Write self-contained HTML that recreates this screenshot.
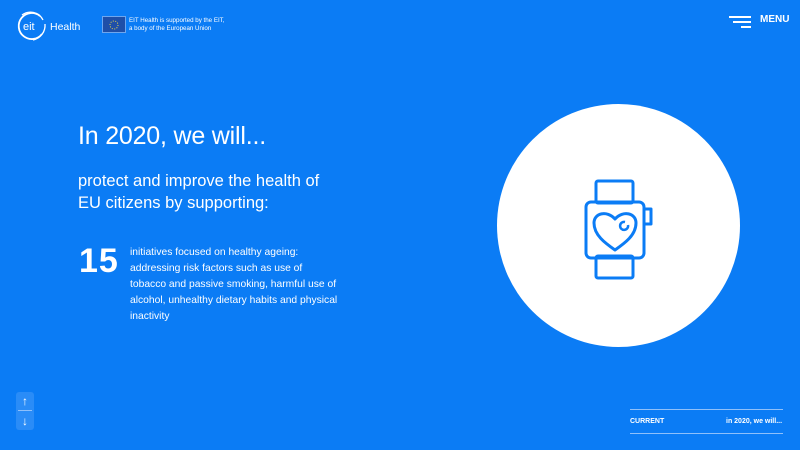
<!DOCTYPE html>
<html><head><meta charset="utf-8"><style>
*{margin:0;padding:0;box-sizing:border-box}
body{width:800px;height:450px;background:#0b7cf5;overflow:hidden;position:relative;font-family:"Liberation Sans",sans-serif;color:#fff}
.a{position:absolute}
</style></head><body>
<svg class="a" style="left:15px;top:10px" width="80" height="32" viewBox="0 0 80 32">
 <path d="M25 6 A13 13 0 1 0 27 24" stroke="#fff" stroke-width="1.8" fill="none"/>
 <path d="M28 10 A14 14 0 0 0 7 5" stroke="#fff" stroke-width="1.3" fill="none"/>
 <path d="M30 14 A15 15 0 0 1 18 30" stroke="#fff" stroke-width="1.3" fill="none"/>
 <text x="8" y="20" font-size="11" fill="#fff" font-family="Liberation Sans">eit</text>
 <text x="35" y="20" font-size="10.5" fill="#fff" font-family="Liberation Sans">Health</text>
</svg>
<div class="a" style="left:102px;top:16px;width:24px;height:17px;background:#1f4fa8;border:1px solid #6fa6ee"></div>
<svg class="a" style="left:108px;top:19px" width="12" height="12"><circle cx="6" cy="6" r="4" stroke="#e8d84a" stroke-width="1" stroke-dasharray="1 1.5" fill="none"/></svg>
<div class="a" style="left:129px;top:17px;font-size:6.2px;line-height:8px">EIT Health is supported by the EIT,<br>a body of the European Union</div>
<div class="a" style="left:729px;top:16px;width:22px;height:2px;background:#fff"></div>
<div class="a" style="left:733px;top:21px;width:18px;height:2px;background:#fff"></div>
<div class="a" style="left:741px;top:26px;width:10px;height:2px;background:#fff"></div>
<div class="a" style="left:760px;top:14px;font-size:10px;font-weight:bold">MENU</div>
<div class="a" style="left:78px;top:122px;font-size:25px;letter-spacing:-0.2px">In 2020, we will...</div>
<div class="a" style="left:78px;top:170px;font-size:16.5px;line-height:22px">protect and improve the health of<br>EU citizens by supporting:</div>
<div class="a" style="left:79px;top:242px;font-size:34px;font-weight:bold;letter-spacing:1px">15</div>
<div class="a" style="left:130px;top:245px;font-size:10.3px;line-height:16px">initiatives focused on healthy ageing:<br>addressing risk factors such as use of<br>tobacco and passive smoking, harmful use of<br>alcohol, unhealthy dietary habits and physical<br>inactivity</div>
<div class="a" style="left:497px;top:104px;width:243px;height:243px;border-radius:50%;background:#fff"></div>
<svg class="a" style="left:560px;top:170px" width="110" height="110" viewBox="0 0 110 110" fill="none" stroke="#0b7cf5" stroke-width="3" stroke-linejoin="round">
 <rect x="36" y="11" width="37" height="22" rx="2"/>
 <rect x="36" y="86" width="37" height="22" rx="2"/>
 <rect x="26" y="32" width="58" height="56" rx="5"/>
 <rect x="84" y="39" width="7" height="15"/>
 <path d="M55 80 C45 73 34 65 34 53 C34 43 47 40 55 49 C63 40 76 43 76 53 C76 65 65 73 55 80Z"/>
 <path d="M65 52 A4 4 0 1 0 68 55" stroke-width="2.5"/>
</svg>
<div class="a" style="left:16px;top:392px;width:18px;height:38px;border-radius:3px;background:#2a8cf7"></div>
<div class="a" style="left:18px;top:410px;width:14px;height:1px;background:#8fc0fa"></div>
<div class="a" style="left:17px;top:394px;font-size:12px;font-weight:bold;width:16px;text-align:center">↑</div>
<div class="a" style="left:17px;top:414px;font-size:12px;font-weight:bold;width:16px;text-align:center">↓</div>
<div class="a" style="left:630px;top:409px;width:153px;height:1px;background:#8fc0fa"></div>
<div class="a" style="left:630px;top:433px;width:153px;height:1px;background:#8fc0fa"></div>
<div class="a" style="left:630px;top:418px;font-size:7px;font-weight:bold">CURRENT</div>
<div class="a" style="left:726px;top:418px;font-size:7px;font-weight:bold">in 2020, we will...</div>
</body></html>
